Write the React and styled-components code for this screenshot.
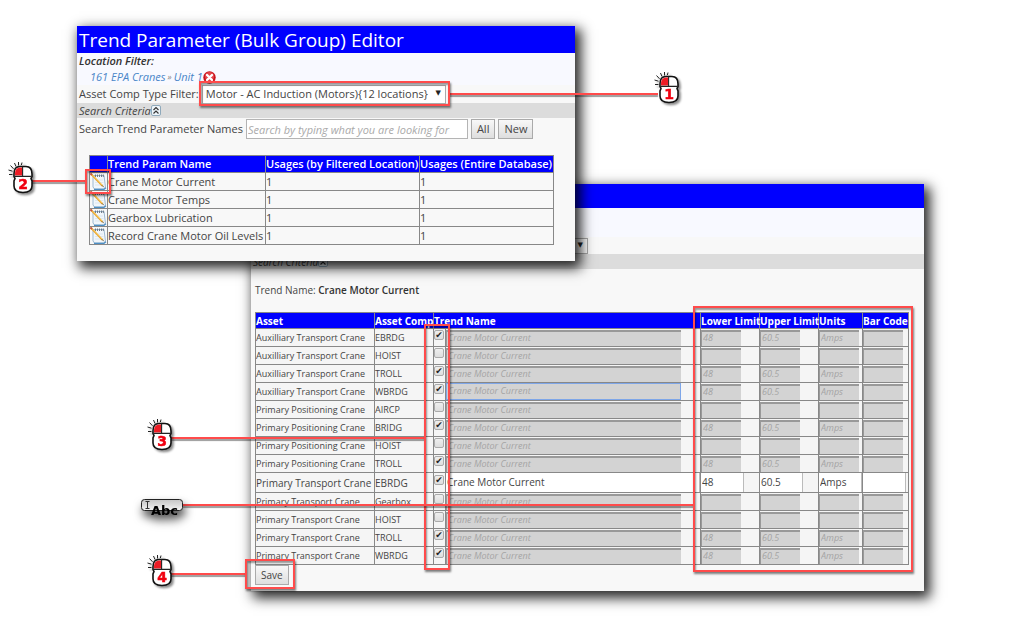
import styled, { createGlobalStyle, css } from 'styled-components';

const usages = [
  { name: 'Crane Motor Current', filtered: 1, total: 1 },
  { name: 'Crane Motor Temps', filtered: 1, total: 1 },
  { name: 'Gearbox Lubrication', filtered: 1, total: 1 },
  { name: 'Record Crane Motor Oil Levels', filtered: 1, total: 1 },
];

const assets = [
  { asset: 'Auxilliary Transport Crane', comp: 'EBRDG', checked: true },
  { asset: 'Auxilliary Transport Crane', comp: 'HOIST' },
  { asset: 'Auxilliary Transport Crane', comp: 'TROLL', checked: true },
  { asset: 'Auxilliary Transport Crane', comp: 'WBRDG', checked: true, focused: true },
  { asset: 'Primary Positioning Crane', comp: 'AIRCP' },
  { asset: 'Primary Positioning Crane', comp: 'BRIDG', checked: true },
  { asset: 'Primary Positioning Crane', comp: 'HOIST' },
  { asset: 'Primary Positioning Crane', comp: 'TROLL', checked: true },
  { asset: 'Primary Transport Crane', comp: 'EBRDG', checked: true, editing: true },
  { asset: 'Primary Transport Crane', comp: 'Gearbox' },
  { asset: 'Primary Transport Crane', comp: 'HOIST' },
  { asset: 'Primary Transport Crane', comp: 'TROLL', checked: true },
  { asset: 'Primary Transport Crane', comp: 'WBRDG', checked: true },
];

const DeleteIcon = () => (
  <svg width="13" height="13" viewBox="0 0 13 13" aria-hidden="true">
    <circle cx="6.5" cy="6.5" r="6.2" fill="#c9131b" />
    <circle cx="6.5" cy="5.5" r="4.6" fill="#e2454a" />
    <path d="M4 4 9 9M9 4 4 9" stroke="#fff" strokeWidth="2.4" strokeLinecap="round" />
  </svg>
);

const CollapseIcon = () => (
  <svg width="10" height="11" viewBox="0 0 10 11" aria-hidden="true">
    <rect x="0.5" y="0.5" width="9" height="10" rx="1.5" fill="#eef5fa" stroke="#8fa9bb" />
    <path d="M2.5 5 5 2.6 7.5 5M2.5 8.5 5 6.1 7.5 8.5" fill="none" stroke="#333" strokeWidth="1.2" />
  </svg>
);

const NotepadIcon = () => (
  <svg width="17" height="17" viewBox="0 0 17 17" aria-hidden="true">
    <path d="M3 2.5H14L15.5 14.5 13.5 16H4.5L3 14Z" fill="#f1f6fb" stroke="#9db9d2" />
    <path d="M4 16.3H14L16 14.8" fill="none" stroke="#4e8fc4" strokeWidth="1.3" />
    <path d="M5.5 1.5V4M7.5 1.5V4M9.5 1.5V4M11.5 1.5V4M13.3 1.5V4" stroke="#66717c" strokeWidth="0.9" />
    <path d="M5 7H13M5 9.5H13.5M5 12H14" stroke="#d8e3ee" strokeWidth="0.8" />
    <path d="M1.5 1.5 12.5 13" stroke="#e9a227" strokeWidth="1.8" />
    <path d="M2 1.4 12.8 12.6" stroke="#ffd76a" strokeWidth="0.8" />
    <path d="M0.4 0.4 2 2" stroke="#c55a3c" strokeWidth="2" />
    <path d="M12 12.4 13.8 14.2" stroke="#6b5a3a" strokeWidth="1" />
  </svg>
);

const MouseIcon = ({ step }) => (
  <svg width="32" height="38" viewBox="0 0 32 38" role="img" aria-label={`Click ${step}`}>
    <g stroke="#222" strokeWidth="1">
      <path d="M2 13.5H5.5M1.5 9 5.5 10.2M3.5 4.5 6.5 7.8M7.5 2 9 5.5M11.5 1V4.5M15 1.5 14.4 4" />
    </g>
    <path
      d="M7 13C7 8 9 5.5 13 5.5H19C23 5.5 25 8 25 13V15.5L24 17.5 25 20V25C25 29.5 21 31.5 16 31.5S7 29.5 7 25V20L8 17.5 7 15.5Z"
      fill="#fff"
      stroke="#111"
      strokeWidth="1.6"
    />
    <path d="M8 14.5V12.5C8 8.5 10 6.5 14 6.5H15V14.5Z" fill="#ee1c25" />
    <path d="M15.6 5.5V15M7.5 15.4H24.5" stroke="#222" strokeWidth="1.1" />
    <text x="16" y="28" textAnchor="middle" fontFamily="DejaVu Sans" fontWeight="bold" fontSize="14" fill="#f00010" stroke="#f00010" strokeWidth="0.5">
      {step}
    </text>
  </svg>
);

const TypeIcon = () => (
  <svg width="46" height="24" viewBox="0 0 46 24" role="img" aria-label="Type text">
    <defs>
      <linearGradient id="pill" x1="0" y1="0" x2="0" y2="1">
        <stop offset="0" stopColor="#c4c4c4" />
        <stop offset="1" stopColor="#f4f4f4" />
      </linearGradient>
    </defs>
    <rect x="1.5" y="1.5" width="41" height="11" rx="3" fill="url(#pill)" stroke="#222" />
    <path d="M5.5 3.5H9.5M7.5 3.5V10.5M5.5 10.5H9.5" fill="none" stroke="#333" />
    <text x="11" y="17" fontFamily="DejaVu Sans" fontWeight="bold" fontSize="13" fill="#000">
      Abc
    </text>
  </svg>
);

const SearchStrip = () => (
  <Strip>
    Search Criteria
    <IconButton type="button" aria-label="Collapse search criteria">
      <CollapseIcon />
    </IconButton>
  </Strip>
);

const TypeSelect = ({ id, label }) => (
  <SelectWrap>
    <Select id={id} aria-label={label}>
      <option>Motor - AC Induction (Motors){'{12 locations}'}</option>
    </Select>
    <Arrow aria-hidden="true">▼</Arrow>
  </SelectWrap>
);

const EditorWindow = () => (
  <FrontWindow>
    <TitleBar>Trend Parameter (Bulk Group) Editor</TitleBar>
    <Location>
      <LocationLabel>Location Filter:</LocationLabel>
      <Crumbs>
        <CrumbLink href="#cranes">161 EPA Cranes</CrumbLink>
        <Separator>»</Separator>
        <CrumbLink href="#unit1">Unit 1</CrumbLink>
        <IconButton type="button" aria-label="Remove location">
          <DeleteIcon />
        </IconButton>
      </Crumbs>
    </Location>
    <FilterRow>
      <label htmlFor="compType">Asset Comp Type Filter:</label>
      <TypeSelect id="compType" />
    </FilterRow>
    <SearchStrip />
    <SearchRow>
      <label htmlFor="search">Search Trend Parameter Names</label>
      <SearchInput id="search" placeholder="Search by typing what you are looking for" />
      <Button type="button">All</Button>
      <Button type="button">New</Button>
    </SearchRow>
    <UsageTable>
      <colgroup>
        <Col $w={18} />
        <Col $w={158} />
        <Col $w={154} />
        <Col $w={134} />
      </colgroup>
      <thead>
        <tr>
          <Th aria-label="Edit" />
          <Th>Trend Param Name</Th>
          <Th>Usages (by Filtered Location)</Th>
          <Th>Usages (Entire Database)</Th>
        </tr>
      </thead>
      <tbody>
        {usages.map((row) => (
          <tr key={row.name}>
            <Td>
              <IconButton type="button" aria-label={`Edit ${row.name}`}>
                <NotepadIcon />
              </IconButton>
            </Td>
            <Td>{row.name}</Td>
            <Td>{row.filtered}</Td>
            <Td>{row.total}</Td>
          </tr>
        ))}
      </tbody>
    </UsageTable>
  </FrontWindow>
);

const AssetRow = ({ row }) => {
  const { asset, comp, checked, focused, editing } = row;
  const value = (text) => (checked ? text : '');
  const field = { $editing: editing, readOnly: !editing };
  return (
    <Row $editing={editing}>
      <Td>{asset}</Td>
      <Td>{comp}</Td>
      <Td>
        <Check type="checkbox" defaultChecked={checked} aria-label={`Use ${asset} ${comp}`} />
      </Td>
      <Td>
        <Field {...field} $wide $focused={focused} defaultValue="Crane Motor Current" aria-label="Trend name" />
      </Td>
      <Td>
        <Field {...field} defaultValue={value('48')} aria-label="Lower limit" />
      </Td>
      <Td>
        <Field {...field} defaultValue={value('60.5')} aria-label="Upper limit" />
      </Td>
      <Td>
        <Field {...field} defaultValue={value('Amps')} aria-label="Units" />
      </Td>
      <Td>
        <Field {...field} aria-label="Bar code" />
      </Td>
    </Row>
  );
};

const TrendWindow = () => (
  <BackWindow>
    <TitleBar $small />
    <Location $small />
    <FilterRow $small>
      <TypeSelect id="compTypeTrend" label="Asset comp type filter" />
    </FilterRow>
    <SearchStrip />
    <TrendName>
      Trend Name: <strong>Crane Motor Current</strong>
    </TrendName>
    <AssetTable>
      <colgroup>
        <Col $w={119} />
        <Col $w={59} />
        <Col $w={12} />
        <Col $w={255} />
        <Col $w={59} />
        <Col $w={59} />
        <Col $w={44} />
        <Col $w={46} />
      </colgroup>
      <thead>
        <tr>
          <Th>Asset</Th>
          <Th>Asset Comp</Th>
          <Th colSpan={2}>Trend Name</Th>
          <Th>Lower Limit</Th>
          <Th>Upper Limit</Th>
          <Th>Units</Th>
          <Th>Bar Code</Th>
        </tr>
      </thead>
      <tbody>
        {assets.map((row) => (
          <AssetRow key={row.asset + row.comp} row={row} />
        ))}
      </tbody>
    </AssetTable>
    <Footer>
      <Button type="button">Save</Button>
    </Footer>
  </BackWindow>
);

const App = () => (
  <Canvas>
    <GlobalStyle />
    <TrendWindow />
    <EditorWindow />

    <Leader $x={450} $y={93} $w={208} />
    <Highlight $x={199} $y={81} $w={251} $h={25} />
    <Marker $x={653} $y={71}><MouseIcon step={1} /></Marker>

    <Leader $x={30} $y={180} $w={56} />
    <Highlight $x={85} $y={169} $w={26} $h={25} />
    <Marker $x={7} $y={161}><MouseIcon step={2} /></Marker>

    <Leader $x={170} $y={437} $w={255} />
    <Highlight $x={424} $y={324} $w={26} $h={246} />
    <Marker $x={146} $y={418}><MouseIcon step={3} /></Marker>

    <Leader $x={182} $y={504} $w={512} />
    <Highlight $x={693} $y={306} $w={220} $h={266} />
    <Marker $x={140} $y={498} $deep><TypeIcon /></Marker>

    <Leader $x={170} $y={573} $w={76} />
    <Highlight $x={245} $y={559} $w={50} $h={30} />
    <Marker $x={146} $y={554}><MouseIcon step={4} /></Marker>
  </Canvas>
);

const GlobalStyle = createGlobalStyle`
  * {
    box-sizing: border-box;
  }
  body {
    margin: 0;
    background: #fff;
    color: #444;
    font-family: "Open Sans", "Noto Sans", sans-serif;
  }
  button, input, select {
    font: inherit;
    color: inherit;
    margin: 0;
  }
`;

const Canvas = styled.main`
  position: relative;
  min-height: 100vh;
  overflow: hidden;
`;

const Window = styled.section`
  position: absolute;
  background: #f8f8f8;
  box-shadow: 4px 5px 12px 2px rgba(0, 0, 0, 0.85);
`;

const FrontWindow = styled(Window)`
  left: 77px;
  top: 26px;
  width: 498px;
  padding-bottom: 16px;
  font-size: 11px;
  line-height: 16px;
`;

const BackWindow = styled(Window)`
  left: 251px;
  top: 184px;
  width: 673px;
  padding-bottom: 6px;
  font-size: 10px;
  line-height: 14px;
`;

const TitleBar = styled.header`
  height: ${({ $small }) => ($small ? 24 : 27)}px;
  padding-left: 2px;
  background: #00f;
  color: #fff;
  font-size: 19px;
  line-height: 28px;
`;

const Location = styled.div`
  height: ${({ $small }) => ($small ? 29 : 32)}px;
  padding-left: 2px;
  background: #f8f9ff;
`;

const LocationLabel = styled.div`
  color: #333;
  font-style: italic;
  font-weight: 600;
`;

const Crumbs = styled.div`
  display: flex;
  align-items: center;
  padding-left: 11px;
  font-style: italic;
`;

const CrumbLink = styled.a`
  color: #4a86c8;
  text-decoration: none;
`;

const Separator = styled.span`
  padding: 0 2px;
  color: #888;
  font-size: 9px;
`;

const IconButton = styled.button`
  display: flex;
  padding: 0;
  border: 0;
  background: none;
`;

const FilterRow = styled.div`
  display: flex;
  align-items: center;
  gap: 3px;
  height: ${({ $small }) => ($small ? 17 : 18)}px;
  padding-left: ${({ $small }) => ($small ? 108 : 2)}px;
`;

const SelectWrap = styled.div`
  position: relative;
  display: flex;
`;

const Select = styled.select`
  appearance: none;
  width: ${({ id }) => (id === 'compType' ? 244 : 229)}px;
  height: ${({ id }) => (id === 'compType' ? 19 : 16)}px;
  padding: 0 3px;
  border: 1px solid #aaa;
  border-radius: 0;
  background: #fff;
`;

const Arrow = styled.span`
  position: absolute;
  right: 5px;
  top: 0;
  color: #222;
  font-family: "DejaVu Sans", sans-serif;
  font-size: 7px;
  pointer-events: none;
`;

const Strip = styled.div`
  display: flex;
  align-items: center;
  height: 15px;
  padding-left: 2px;
  background: #dcdcdc;
  font-style: italic;
`;

const SearchRow = styled.div`
  display: flex;
  align-items: center;
  gap: 3px;
  padding: 1px 2px;
`;

const SearchInput = styled.input`
  width: 222px;
  height: 20px;
  padding: 0 1px;
  border: 1px solid #b4b4b4;
  background: #fff;

  &::placeholder {
    color: #aaa;
    font-style: italic;
  }
`;

const Button = styled.button`
  height: 20px;
  padding: 0 5px;
  border: 1px solid #aaa;
  background: linear-gradient(#f8f8f8, #dedede);
  line-height: 16px;
`;

const Table = styled.table`
  table-layout: fixed;
  border-collapse: collapse;
`;

const Col = styled.col`
  width: ${({ $w }) => $w}px;
`;

const Th = styled.th`
  padding: 0;
  border: 1px solid #888;
  background: #00f;
  color: #fff;
  text-align: left;
  white-space: nowrap;
`;

const Td = styled.td`
  padding: 0;
  border: 1px solid #888;
  white-space: nowrap;
`;

const UsageTable = styled(Table)`
  width: 465px;
  margin: 15px 12px 0;

  tr {
    height: 18px;
  }
  thead tr {
    height: 17px;
  }
  ${Th} {
    font-weight: 600;
  }
`;

const AssetTable = styled(Table)`
  width: 654px;
  margin-left: 4px;

  thead tr {
    height: 16px;
  }
`;

const Row = styled.tr`
  height: ${({ $editing }) => ($editing ? 20 : 18)}px;
  background: #f5f5f5;
  font-size: ${({ $editing }) => ($editing ? 10 : 9)}px;
`;

const Check = styled.input`
  appearance: none;
  display: flex;
  align-items: center;
  justify-content: center;
  width: 10px;
  height: 10px;
  border: 1px solid #aaa;
  border-radius: 2px;
  background: linear-gradient(#eee, #ddd);

  ${Td} > & {
    margin-bottom: 5px;
  }

  &:checked::after {
    content: "✔";
    color: #222;
    font-family: "DejaVu Sans", sans-serif;
    font-size: 9px;
    font-weight: bold;
  }
`;

const Field = styled.input`
  display: block;
  width: ${({ $wide }) => ($wide ? 235 : 40)}px;
  height: 16px;
  padding: 0 1px 2px;
  border: 0;
  border-top: 2px solid #999;
  border-left: 1px solid #999;
  border-radius: 0;
  background: #d3d3d3;
  color: #a4a4a4;
  font-size: 9px;
  font-style: italic;
  outline: none;

  ${({ $focused }) => $focused && css`
    height: 17px;
    border: 1px solid #7ea6e8;
  `}

  ${({ $editing, $wide }) => $editing && css`
    width: ${$wide ? 254 : 43}px;
    height: 19px;
    border: 0;
    border-right: 1px solid #bbb;
    background: #fff;
    color: #444;
    font-size: 10px;
    font-style: normal;
  `}
`;

const TrendName = styled.div`
  padding: 14px 4px 15px;

  strong {
    color: #333;
    font-weight: 600;
  }
`;

const Footer = styled.div`
  padding: 0 4px;
`;

const Highlight = styled.div`
  position: absolute;
  left: ${({ $x }) => $x}px;
  top: ${({ $y }) => $y}px;
  width: ${({ $w }) => $w}px;
  height: ${({ $h }) => $h}px;
  border: 2px solid #ff4b4b;
  box-shadow: 1px 2px 2px rgba(0, 0, 0, 0.5), inset 1px 2px 2px rgba(0, 0, 0, 0.4);
  pointer-events: none;
`;

const Leader = styled.div`
  position: absolute;
  left: ${({ $x }) => $x}px;
  top: ${({ $y }) => $y}px;
  width: ${({ $w }) => $w}px;
  height: 2px;
  background: #ff4b4b;
  box-shadow: 0 2px 1px rgba(0, 0, 0, 0.4);
`;

const Marker = styled.div`
  position: absolute;
  left: ${({ $x }) => $x}px;
  top: ${({ $y }) => $y}px;
  display: flex;
  filter: ${({ $deep }) =>
    $deep ? 'drop-shadow(2px 6px 5px rgba(0, 0, 0, 0.7))' : 'drop-shadow(2px 2px 1px rgba(0, 0, 0, 0.45))'};
`;

export default App;
